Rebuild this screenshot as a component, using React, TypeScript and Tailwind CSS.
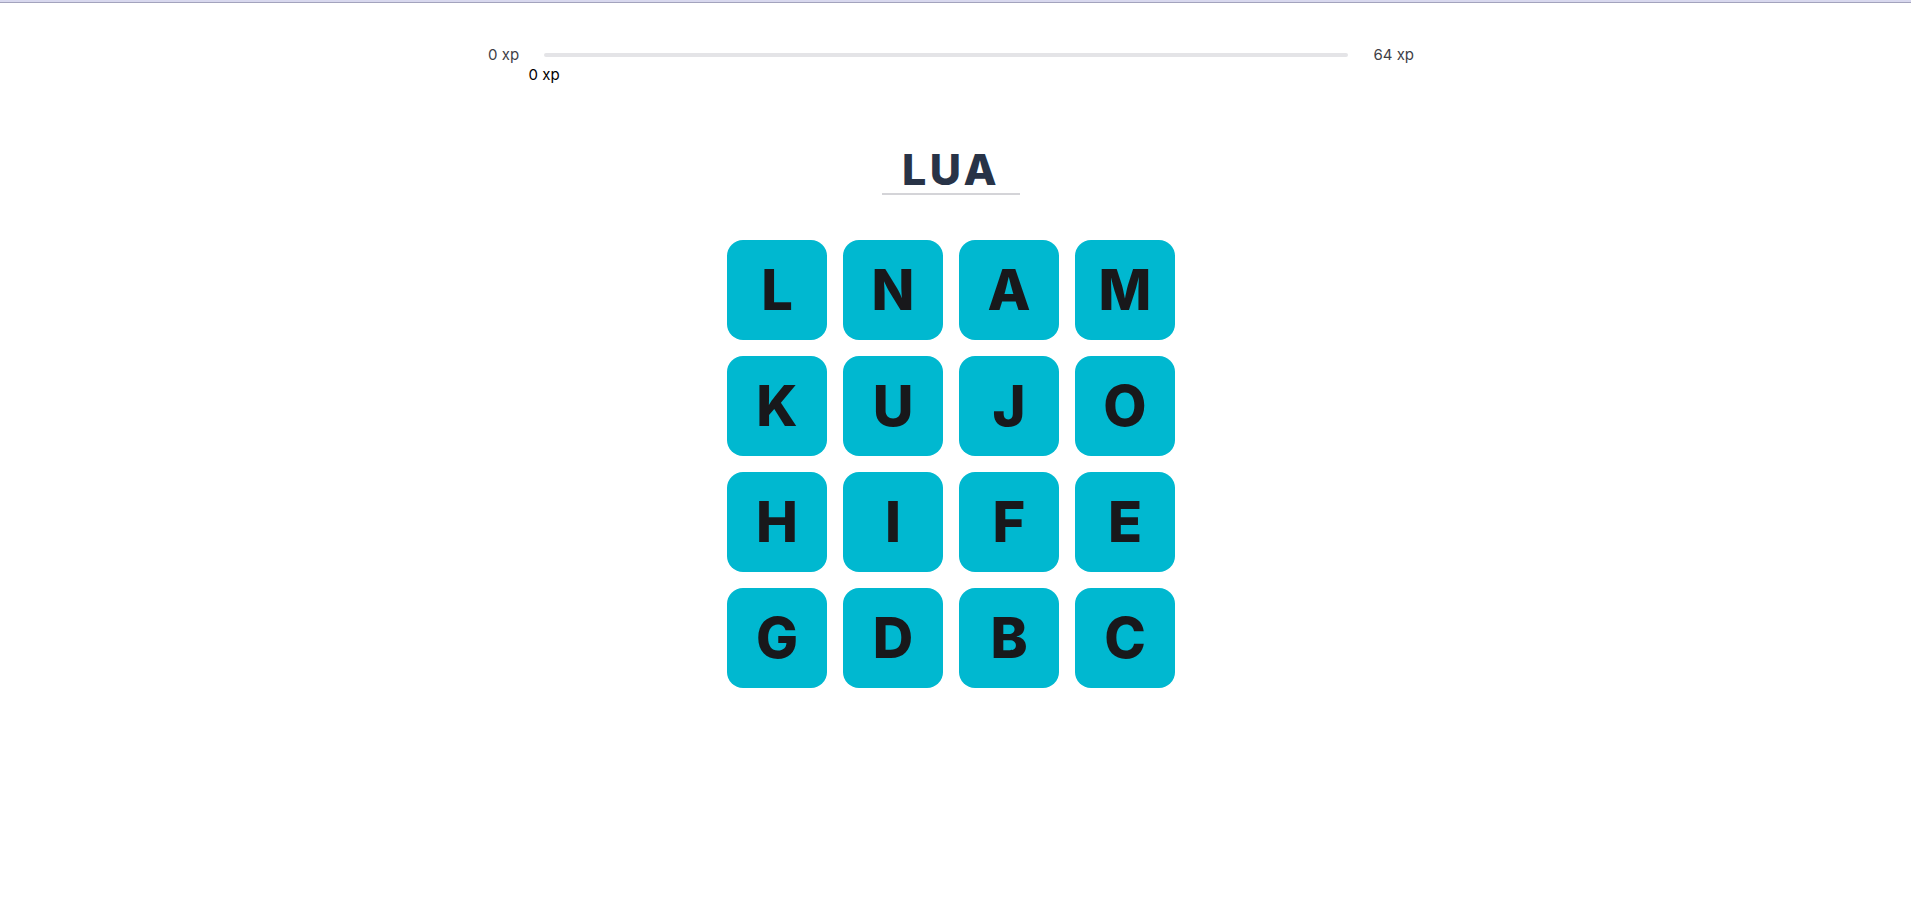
const LETTERS = [
  "L", "N", "A", "M",
  "K", "U", "J", "O",
  "H", "I", "F", "E",
  "G", "D", "B", "C",
];

const XP = 0;
const MAX_XP = 64;

export default function App() {
  const progress = (XP / MAX_XP) * 100;

  return (
    <div className="min-h-screen bg-white font-['Inter','Liberation_Sans',sans-serif]">
      <div className="h-[3px] border-b border-[#a3a3bd] bg-[#d8d8ee]" />

      <div className="flex flex-col items-center pr-[9px]">
        <div className="mt-[41px] flex w-[926px] items-center gap-[25px] text-[15px]">
          <span className="text-zinc-700">{XP} xp</span>
          <div className="relative flex-1">
            <div className="h-1 w-full rounded-full bg-zinc-200" />
            <span
              className="absolute top-[11px] -translate-x-1/2 text-black"
              style={{ left: `${progress}%` }}
            >
              {XP} xp
            </span>
          </div>
          <span className="text-zinc-700">{MAX_XP} xp</span>
        </div>

        <div className="mt-[78px] border-b-2 border-zinc-300 px-[20px]">
          <h1 className="text-[43px] leading-[48px] font-extrabold tracking-[0.08em] text-[#283347]">
            LUA
          </h1>
        </div>

        <div className="mt-[45px] grid grid-cols-4 gap-4">
          {LETTERS.map((letter) => (
            <button
              key={letter}
              className="flex h-[100px] w-[100px] items-center justify-center rounded-2xl bg-[#00b8d0] text-[56px] font-extrabold text-zinc-900"
            >
              {letter}
            </button>
          ))}
        </div>
      </div>
    </div>
  );
}
